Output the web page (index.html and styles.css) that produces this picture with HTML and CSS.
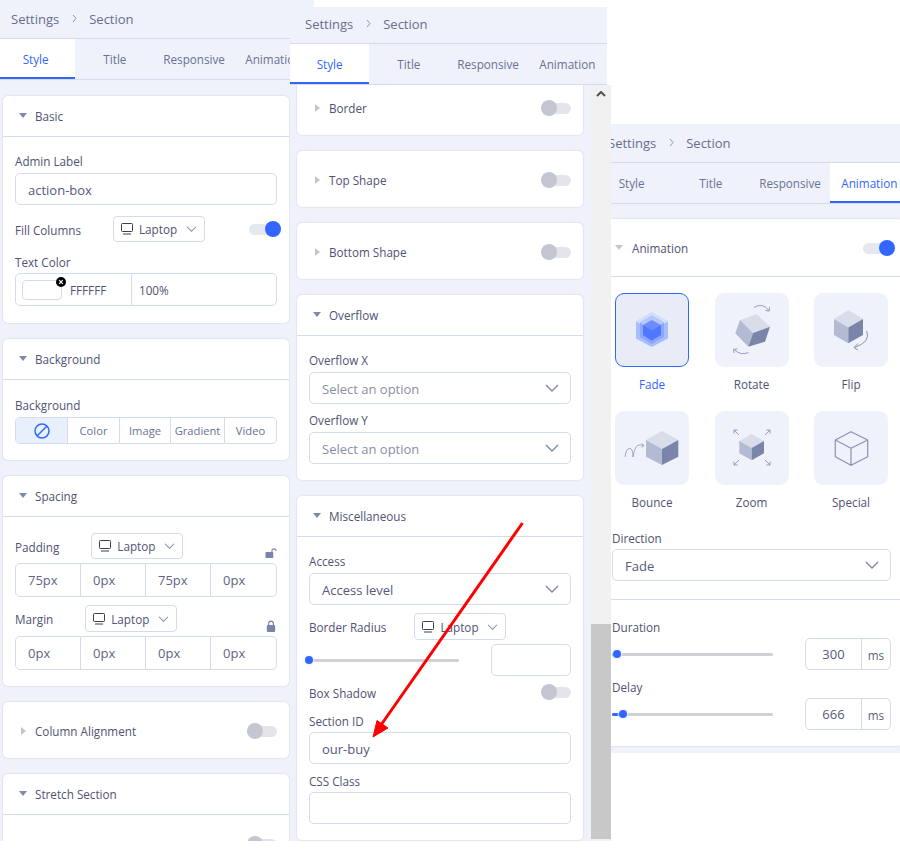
FILE: index.html
```html
<!DOCTYPE html>
<html lang="en">
<head>
<meta charset="utf-8">
<title>Section settings</title>
<link rel="stylesheet" href="styles.css">
</head>
<body>
<svg class="defs" width="0" height="0" aria-hidden="true">
  <symbol id="monitor" viewBox="0 0 14 12"><rect x="1.5" y="0.5" width="11" height="8" rx="0.8" fill="none" stroke="currentColor"/><path d="M3 11h8" stroke="currentColor"/></symbol>
  <symbol id="chev" viewBox="0 0 14 8"><path d="M1 1l6 6 6-6" fill="none" stroke="currentColor" stroke-width="1.4"/></symbol>
</svg>
<div class="desk">

<section class="panel panel-a">
  <div class="crumb"><span>Settings</span><svg class="crumb-sep" viewBox="0 0 5 9"><path d="M1 1l3 3.5L1 8" fill="none" stroke="currentColor"/></svg><span>Section</span></div>
  <div class="tabs"><div class="tab active">Style</div><div class="tab">Title</div><div class="tab">Responsive</div><div class="tab">Animation</div></div>
  <div class="body">
    <div class="card">
      <div class="card-head"><i class="tri-down"></i>Basic</div>
      <div class="card-body pb17">
        <label class="label">Admin Label</label>
        <div class="input">action-box</div>
        <div class="row mt11">
          <span class="row-label">Fill Columns</span>
          <div class="device h26"><svg class="mon"><use href="#monitor"/></svg>Laptop<svg class="chev-s"><use href="#chev"/></svg></div>
          <span class="toggle on out4"><b></b></span>
        </div>
        <label class="label mt12 lb3">Text Color</label>
        <div class="color">
          <div class="color-main"><span class="swatch"><svg class="swatch-x" viewBox="0 0 10 10"><circle cx="5" cy="5" r="5" fill="#000"/><path d="M3.2 3.2l3.6 3.6M6.8 3.2L3.2 6.8" stroke="#fff" stroke-width="1.2"/></svg></span>FFFFFF</div>
          <div class="color-alpha">100%</div>
        </div>
      </div>
    </div>

    <div class="card">
      <div class="card-head"><i class="tri-down"></i>Background</div>
      <div class="card-body pt17">
        <label class="label">Background</label>
        <div class="seg">
          <div class="seg-item sel"><svg class="ban" viewBox="0 0 16 16"><circle cx="8" cy="8" r="7" fill="none" stroke="#3366ff" stroke-width="1.5"/><path d="M3.2 12.8l9.6-9.6" stroke="#3366ff" stroke-width="1.5"/></svg></div>
          <div class="seg-item">Color</div>
          <div class="seg-item">Image</div>
          <div class="seg-item">Gradient</div>
          <div class="seg-item">Video</div>
        </div>
      </div>
    </div>

    <div class="card">
      <div class="card-head"><i class="tri-down"></i>Spacing</div>
      <div class="card-body">
        <div class="row">
          <span class="row-label">Padding</span>
          <div class="device h26"><svg class="mon"><use href="#monitor"/></svg>Laptop<svg class="chev-s"><use href="#chev"/></svg></div>
          <svg class="lock" viewBox="0 0 13 11"><path d="M7.5 5V3.2a2.2 2.2 0 0 1 4.4 0" fill="none" stroke="#7a85a9" stroke-width="1.2"/><rect x="0.5" y="4.5" width="8.5" height="6.5" rx="1" fill="#7a85a9"/></svg>
        </div>
        <div class="quad mt4"><div>75px</div><div>0px</div><div>75px</div><div>0px</div></div>
        <div class="row mt8">
          <span class="row-label">Margin</span>
          <div class="device h27"><svg class="mon"><use href="#monitor"/></svg>Laptop<svg class="chev-s"><use href="#chev"/></svg></div>
          <svg class="lock" viewBox="0 0 13 13"><path d="M4 6V3.8a2.5 2.5 0 0 1 5 0V6" fill="none" stroke="#7a85a9" stroke-width="1.3"/><rect x="2" y="5.5" width="9" height="7.5" rx="1" fill="#7a85a9"/></svg>
        </div>
        <div class="quad mt4"><div>0px</div><div>0px</div><div>0px</div><div>0px</div></div>
      </div>
    </div>

    <div class="card card-closed"><i class="tri-right"></i>Column Alignment<span class="toggle"><b></b></span></div>

    <div class="card">
      <div class="card-head"><i class="tri-down"></i>Stretch Section</div>
      <div class="card-body stretch-body"><span class="toggle"><b></b></span></div>
    </div>
  </div>
</section>

<section class="panel panel-c">
  <div class="crumb"><span>Settings</span><svg class="crumb-sep" viewBox="0 0 5 9"><path d="M1 1l3 3.5L1 8" fill="none" stroke="currentColor"/></svg><span>Section</span></div>
  <div class="tabs"><div class="tab">Style</div><div class="tab">Title</div><div class="tab">Responsive</div><div class="tab active">Animation</div></div>
  <div class="body body-c">
    <div class="card card-c">
      <div class="card-head head-c"><i class="tri-down pale"></i>Animation<span class="toggle on"><b></b></span></div>
      <div class="card-body body-anim">
        <div class="anim-grid">
          <div class="anim sel">
            <div class="anim-tile"><svg viewBox="0 0 74 74">
              <path d="M36.7 19.5L53 28.5V45.5L36.7 54L21 45.5V28.5Z" fill="#a9bcfb"/>
              <path d="M36.7 19.5L53 28.5L36.7 37.5L21 28.5Z" fill="#d6dff8"/>
              <path d="M36.7 22.5L49 29.5V44L36.7 51L25 44V29.5Z" fill="#8ba6fc"/>
              <path d="M36.7 22.5L49 29.5L36.7 37.5L25 29.5Z" fill="#b6c7fb"/>
              <path d="M36.7 27L46 32V42L36.7 47.5L28 42V32Z" fill="#6b8dfd"/>
              <path d="M36.7 37.5L46 32V42L36.7 47.5L28 42V32Z" fill="#4f78ff"/>
            </svg></div>
            <span>Fade</span>
          </div>
          <div class="anim">
            <div class="anim-tile"><svg viewBox="0 0 74 74">
              <path d="M25 27L41.7 21.3L55 33.7L38 40Z" fill="#d8dde9"/>
              <path d="M25 27L38 40L33.3 53.7L20.3 40.3Z" fill="#b3bbd2"/>
              <path d="M38 40L55 33.7L50 48.7L33.3 53.7Z" fill="#7a85a9"/>
              <path d="M39 14.5Q47 9 54 17.5M50.5 17.5L54.3 18L54.5 14M33.5 59.5Q26 63 19 56.5M22.5 56L18.7 56.2L18.8 60" fill="none" stroke="#8a94b5" stroke-width="0.9"/>
            </svg></div>
            <span>Rotate</span>
          </div>
          <div class="anim">
            <div class="anim-tile"><svg viewBox="0 0 74 74">
              <path d="M34.3 17L49 26L34.3 34.5L20 26Z" fill="#d8dde9"/>
              <path d="M20 26L34.3 34.5V50.3L20 42Z" fill="#b3bbd2"/>
              <path d="M49 26V42L34.3 50.3V34.5Z" fill="#7a85a9"/>
              <path d="M52.7 38Q57 49 40.5 54.5M44 50.5L40 54.5L44 57" fill="none" stroke="#8a94b5" stroke-width="1"/>
            </svg></div>
            <span>Flip</span>
          </div>
          <div class="anim">
            <div class="anim-tile"><svg viewBox="0 0 74 74">
              <path d="M47 20L63.3 29L47 38L31 29Z" fill="#d8dde9"/>
              <path d="M31 29L47 38V54L31 45.7Z" fill="#b3bbd2"/>
              <path d="M63.3 29V45.7L47 54V38Z" fill="#7a85a9"/>
              <path d="M10 46Q11 37 15 37.5Q18 38 18 46Q20 33 25 34Q27 34 29 34.5M26.5 32.5L29 34.5L26.5 36.5" fill="none" stroke="#8a94b5" stroke-width="0.8"/>
            </svg></div>
            <span>Bounce</span>
          </div>
          <div class="anim">
            <div class="anim-tile"><svg viewBox="0 0 74 74">
              <path d="M36.7 23L49 30L36.7 37L24.3 30Z" fill="#d8dde9"/>
              <path d="M24.3 30L36.7 37V49.3L24.3 42.3Z" fill="#b3bbd2"/>
              <path d="M49 30V42.3L36.7 49.3V37Z" fill="#7a85a9"/>
              <path d="M19 19L24 24M19 22.5V19H22.5M55 19L50 24M51.5 19H55V22.5M19 54L24 49M19 50.5V54H22.5M55 54L50 49M55 50.5V54H51.5" fill="none" stroke="#8a94b5" stroke-width="0.9"/>
            </svg></div>
            <span>Zoom</span>
          </div>
          <div class="anim">
            <div class="anim-tile"><svg viewBox="0 0 74 74">
              <path d="M37 20.7L53.7 29V45.7L37 54.3L21.3 45.7V29ZM21.3 29L37 37.3L53.7 29M37 37.3V54.3" fill="none" stroke="#8892b4" stroke-width="1.2" stroke-linejoin="round"/>
            </svg></div>
            <span>Special</span>
          </div>
        </div>
        <label class="label mt20 lb3">Direction</label>
        <div class="input select">Fade<svg class="chev-l"><use href="#chev"/></svg></div>
        <hr class="divider">
        <label class="label lb3">Duration</label>
        <div class="slide-row">
          <div class="slider wide"><span class="fill f0"></span><span class="thumb t-dur"></span></div>
          <div class="unit"><div class="unit-val">300</div><div class="unit-name">ms</div></div>
        </div>
        <label class="label mt9 lb3">Delay</label>
        <div class="slide-row">
          <div class="slider wide"><span class="fill f1"></span><span class="thumb t-del"></span></div>
          <div class="unit"><div class="unit-val">666</div><div class="unit-name">ms</div></div>
        </div>
      </div>
    </div>
  </div>
</section>

<section class="panel panel-b">
  <div class="crumb"><span>Settings</span><svg class="crumb-sep" viewBox="0 0 5 9"><path d="M1 1l3 3.5L1 8" fill="none" stroke="currentColor"/></svg><span>Section</span></div>
  <div class="tabs"><div class="tab active">Style</div><div class="tab">Title</div><div class="tab">Responsive</div><div class="tab">Animation</div></div>
  <div class="scroll">
    <div class="body body-b">
      <div class="card card-closed card-cut"><i class="tri-right"></i>Border<span class="toggle"><b></b></span></div>
      <div class="card card-closed"><i class="tri-right"></i>Top Shape<span class="toggle"><b></b></span></div>
      <div class="card card-closed"><i class="tri-right"></i>Bottom Shape<span class="toggle"><b></b></span></div>
      <div class="card">
        <div class="card-head"><i class="tri-down"></i>Overflow</div>
        <div class="card-body">
          <label class="label">Overflow X</label>
          <div class="input select placeholder">Select an option<svg class="chev-l"><use href="#chev"/></svg></div>
          <label class="label mt8">Overflow Y</label>
          <div class="input select placeholder">Select an option<svg class="chev-l"><use href="#chev"/></svg></div>
        </div>
      </div>
      <div class="card">
        <div class="card-head"><i class="tri-down"></i>Miscellaneous</div>
        <div class="card-body">
          <label class="label">Access</label>
          <div class="input select">Access level<svg class="chev-l"><use href="#chev"/></svg></div>
          <div class="row row-tight mt8">
            <span class="row-label">Border Radius</span>
            <div class="device h27"><svg class="mon"><use href="#monitor"/></svg>Laptop<svg class="chev-s"><use href="#chev"/></svg></div>
          </div>
          <div class="slide-row mt4">
            <div class="slider narrow"><span class="thumb t-rad"></span></div>
            <div class="input short"></div>
          </div>
          <div class="row mt8 h16">
            <span class="row-label">Box Shadow</span>
            <span class="toggle"><b></b></span>
          </div>
          <label class="label mt13 lb3">Section ID</label>
          <div class="input">our-buy</div>
          <label class="label mt9 lb3">CSS Class</label>
          <div class="input"></div>
        </div>
      </div>
    </div>
    <div class="scrollbar">
      <svg class="scroll-up" viewBox="0 0 10 6"><path d="M1 5l4-4 4 4" fill="none" stroke="#505050" stroke-width="2"/></svg>
      <div class="scroll-thumb"></div>
    </div>
  </div>
</section>

<svg class="arrow" viewBox="0 0 900 850" aria-hidden="true">
  <path d="M522.5 523L381 725" stroke="#f00" stroke-width="3" fill="none"/>
  <path d="M373 737L377 720.5L388 728Z" fill="#f00" stroke="#f00" stroke-width="1"/>
</svg>
</div>
</body>
</html>
```
FILE: styles.css
```css
* { box-sizing: border-box; }
html, body { margin: 0; padding: 0; background: #fff; }
body { font-family: "Open Sans", "Noto Sans", sans-serif; color: #4f5373; font-size: 11.7px; overflow: hidden; }
.defs { position: absolute; }
.desk { position: relative; width: 900px; height: 850px; overflow: hidden; }

.panel { position: absolute; overflow: hidden; background: #eff2fa; }
.panel-a { left: -4px; top: 0; width: 318px; height: 841px; }
.panel-b { left: 290px; top: 5px; width: 321px; height: 836px; background: #fff; clip-path: inset(2px 0 0 0); }
.panel-c { left: 592px; top: 124px; width: 308px; height: 629px; }

.crumb { display: flex; align-items: center; gap: 12.5px; width: 317px; height: 39px; padding: 0 15px; background: #eff2fa; border-bottom: 1px solid #d5dbef; color: #676d8f; font-size: 13px; }
.crumb-sep { width: 5px; height: 9px; color: #8d94b0; margin-top: -1px; }
.panel-c .crumb { padding-left: 16px; }

.tabs { display: flex; width: 317px; height: 41px; background: #eff2fa; border-bottom: 1px solid #d5dbef; }
.tab { flex: 0 0 79.25px; height: 40px; padding-top: 2px; display: flex; align-items: center; justify-content: center; color: #6a7194; font-size: 11.7px; border-bottom: 2px solid transparent; }
.tab.active { background: #fff; color: #3366ff; border-bottom-color: #3366ff; }

.body { display: flex; flex-direction: column; gap: 16px; padding: 16px 0 0 7px; }
.body-c { padding-top: 15px; }
.scroll { display: flex; height: 756px; }
.body-b { flex: 0 0 301px; padding-top: 0; overflow: hidden; background: #eff2fa; }

.card { flex: none; width: 286px; background: #fff; border-radius: 5px; box-shadow: 0 0 2px rgba(120, 130, 170, .35); }
.card-head { display: flex; align-items: center; height: 41px; padding: 0 16px; border-bottom: 1px solid #d5dbef; font-size: 11.7px; color: #4f5373; }
.card-closed { display: flex; align-items: center; height: 56px; padding: 2px 12px 0 16px; font-size: 11.7px; color: #4f5373; }
.card-cut { margin-top: -6px; }
.card-body { padding: 16px 12px; }
.pb17 { padding-bottom: 17px; }
.pt17 { padding-top: 17px; }
.stretch-body { display: flex; justify-content: flex-end; padding-top: 24px; }

.tri-down { width: 0; height: 0; margin-right: 8px; margin-top: -1px; border-style: solid; border-width: 5px 4px 0; border-color: #7f89ab transparent transparent; }
.tri-down.pale { border-color: #c4c6d0 transparent transparent; margin-right: 9px; }
.tri-right { width: 0; height: 0; margin: -1px 9px 0 2px; border-style: solid; border-width: 4px 0 4px 5px; border-color: transparent transparent transparent #c2c6d2; }

.label { display: block; height: 16px; line-height: 16px; margin-bottom: 4px; font-size: 11.7px; color: #4f5373; }
.lb3 { margin-bottom: 3px; }
.mt4 { margin-top: 4px; }
.mt8 { margin-top: 8px; }
.mt9 { margin-top: 9px; }
.mt11 { margin-top: 11px; }
.mt12 { margin-top: 12px; }
.mt13 { margin-top: 13px; }
.mt20 { margin-top: 20px; }

.input { display: flex; align-items: center; height: 32px; padding: 1px 12px 0; background: #fff; border: 1px solid #d5dbef; border-radius: 5px; font-size: 13px; color: #55597a; }
.select { justify-content: space-between; }
.placeholder { color: #8a8ea3; }
.chev-l { width: 14px; height: 8px; color: #7d88a9; margin-right: -1px; margin-top: -2px; }

.row { display: flex; align-items: center; gap: 32px; }
.row-tight { gap: 28px; }
.h16 { height: 16px; }
.row .toggle, .row .lock { margin-left: auto; }
.row-label { padding-top: 1px; font-size: 11.7px; color: #4f5373; }
.device { display: flex; align-items: center; width: 92px; padding: 0 6px; border: 1px solid #d5dbef; border-radius: 4px; font-size: 11.7px; color: #4f5373; background: #fff; }
.h26 { height: 26px; }
.h27 { height: 27px; }
.mon { width: 14px; height: 12px; color: #3d3f4f; margin-right: 5px; }
.chev-s { width: 11px; height: 6px; margin-left: auto; margin-right: 1px; color: #7d88a9; }

.toggle { position: relative; display: inline-block; flex: none; width: 30px; height: 11px; margin-left: auto; border-radius: 6px; background: #e3e5ea; }
.toggle b { position: absolute; top: -3px; left: 0; width: 16px; height: 16px; border-radius: 50%; background: #c4c7d2; }
.toggle.on { width: 32px; background: #e6e8f0; }
.toggle.on b { left: auto; right: 0; background: #3366ff; }
.out4 { margin-right: -4px; }
.head-c { height: 58px; padding: 1px 8px 0 16px; }

.color { display: flex; height: 33px; border: 1px solid #d5dbef; border-radius: 5px; }
.color-main { display: flex; align-items: center; gap: 8px; width: 116px; padding-left: 6px; border-right: 1px solid #d5dbef; font-size: 11.7px; }
.color-alpha { display: flex; align-items: center; padding-left: 7px; font-size: 11.7px; }
.swatch { position: relative; width: 40px; height: 20px; border: 1px solid #d5dbef; border-radius: 4px; }
.swatch-x { position: absolute; right: -5px; top: -4px; width: 10px; height: 10px; }

.seg { display: grid; grid-template-columns: 51px 52px 51px 54px 52px; height: 27px; border: 1px solid #d5dbef; border-radius: 5px; overflow: hidden; }
.seg-item { display: flex; align-items: center; justify-content: center; font-size: 11.2px; color: #6a7194; border-left: 1px solid #d5dbef; }
.seg-item:first-child { border-left: 0; }
.seg-item.sel { background: #e8f0fd; }
.ban { width: 16px; height: 16px; }

.lock { width: 12px; height: 12px; align-self: flex-end; flex: none; }
.quad { display: grid; grid-template-columns: 64px 65px 65px 66px; height: 34px; border: 1px solid #d5dbef; border-radius: 5px; }
.quad div { display: flex; align-items: center; padding-left: 12px; font-size: 13px; color: #5f6482; border-left: 1px solid #d5dbef; }
.quad div:first-child { border-left: 0; }

.slide-row { display: flex; align-items: center; justify-content: space-between; height: 32px; }
.short { width: 80px; }
.slider { position: relative; height: 3px; background: #d0d0d6; border-radius: 2px; }
.narrow { width: 152px; margin-left: -2px; }
.wide { width: 161px; }
.thumb { position: absolute; top: -2.5px; width: 8px; height: 8px; border-radius: 50%; background: #3366ff; box-shadow: 0 0 2px 1px rgba(255, 255, 255, .9), 0 0 3px rgba(51, 102, 255, .4); }
.t-rad { left: -2px; }
.t-dur { left: 1px; }
.t-del { left: 7px; }
.fill { position: absolute; left: 0; top: 0; height: 3px; background: #3366ff; border-radius: 2px; }
.f0 { width: 4px; }
.f1 { width: 9px; }

.unit { display: flex; width: 86px; height: 32px; border: 1px solid #d5dbef; border-radius: 5px; background: #fff; }
.unit-val { display: flex; align-items: center; justify-content: center; width: 56px; border-right: 1px solid #d5dbef; font-size: 13px; color: #55597a; }
.unit-name { display: flex; align-items: center; justify-content: center; flex: 1; font-size: 11.7px; color: #5a5f7c; padding-top: 1px; }

.card-c { width: 304px; }
.body-anim { padding: 16px 12px 16px 13px; }
.anim-grid { display: grid; grid-template-columns: 74px 74px 74px; column-gap: 25.5px; row-gap: 19px; margin-left: 3px; }
.anim { display: flex; flex-direction: column; align-items: center; gap: 9px; font-size: 11.7px; line-height: 16px; color: #4f5373; }
.anim-tile { width: 74px; height: 74px; background: #eff2fa; border-radius: 9px; }
.anim-tile svg { display: block; width: 74px; height: 74px; }
.anim.sel { color: #3366ff; }
.anim.sel .anim-tile { background: #e7ecf6; border: 1px solid #3366ff; }
.anim.sel .anim-tile svg { margin: -1px; }
.divider { height: 1px; margin: 18px -12px 19px -13px; border: 0; background: #d5dbef; }

.scrollbar { position: relative; display: flex; flex-direction: column; flex: 0 0 20px; background: #f1f1f1; }
.scroll-up { width: 10px; height: 6px; margin: 6px 0 0 5px; }
.scroll-thumb { width: 20px; height: 215px; margin-top: auto; margin-bottom: 2px; background: #c8c8c8; }

.arrow { position: absolute; left: 0; top: 0; width: 900px; height: 850px; pointer-events: none; }
```
